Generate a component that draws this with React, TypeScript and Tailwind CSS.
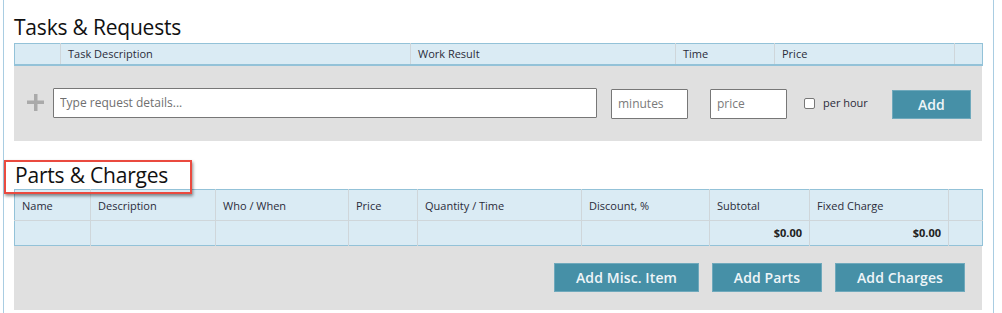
import React from 'react';

const taskCols = [
  { label: '', w: 46 },
  { label: 'Task Description', w: 350 },
  { label: 'Work Result', w: 265 },
  { label: 'Time', w: 99 },
  { label: 'Price', w: 180 },
  { label: '', w: 28 },
];

const partCols = [
  { label: 'Name', w: 76, value: '' },
  { label: 'Description', w: 125, value: '' },
  { label: 'Who / When', w: 133, value: '' },
  { label: 'Price', w: 69, value: '' },
  { label: 'Quantity / Time', w: 164, value: '' },
  { label: 'Discount, %', w: 128, value: '' },
  { label: 'Subtotal', w: 100, value: '$0.00' },
  { label: 'Fixed Charge', w: 139, value: '$0.00' },
  { label: '', w: 34, value: '' },
];

function ActionButton({ label, w }: { label: string; w: string }) {
  return (
    <button
      className={`${w} h-[29px] bg-[#4690a7] border border-[#6fa9bc] text-[#eef5f8] text-[14px] font-semibold tracking-[0.1px]`}
    >
      {label}
    </button>
  );
}

export default function App() {
  return (
    <div
      className="w-[1002px] h-[313px] bg-white overflow-hidden text-[#222]"
      style={{ fontFamily: '"Open Sans", "Noto Sans", sans-serif' }}
    >
      <div className="ml-[3px] w-[991px] h-full border-l border-r border-[#a9cde2] pl-[10px] pr-[10px]">
        {/* --- TASKS & REQUESTS --- */}
        <h2 className="pt-[13px] h-[43px] text-[21px] leading-[29px] text-[#111] tracking-[-0.2px]">
          Tasks &amp; Requests
        </h2>
        <table className="table-fixed border-collapse w-[968px]">
          <colgroup>
            {taskCols.map((c, i) => (
              <col key={i} style={{ width: c.w }} />
            ))}
          </colgroup>
          <thead>
            <tr className="h-[21px] bg-[#daebf4] border border-[#93c2d8] border-b-2">
              {taskCols.map((c, i) => (
                <th
                  key={i}
                  className="border-l border-[#cfd6da] first:border-l-0 px-[7px] text-left text-[11px] font-normal text-[#2b2b3a]"
                >
                  {c.label}
                </th>
              ))}
            </tr>
          </thead>
        </table>
        <div className="w-[968px] h-[75px] bg-[#e0e0e0] flex items-start pt-[22px]">
          <span className="w-[39px] h-[30px] flex items-center justify-center pl-[3px]">
            <svg width="17" height="17" viewBox="0 0 17 17">
              <rect x="7" y="0" width="3.5" height="17" fill="#aaaaaa" />
              <rect x="0" y="6.5" width="17" height="3.5" fill="#aaaaaa" />
            </svg>
          </span>
          <input
            className="w-[544px] h-[30px] bg-white border border-[#777] rounded-[1px] px-[6px] text-[12px] placeholder:text-[#6f6f6f] outline-none"
            placeholder="Type request details..."
          />
          <input
            className="ml-[14px] mt-[1px] w-[77px] h-[30px] bg-white border border-[#777] rounded-[1px] px-[6px] text-[12px] placeholder:text-[#7a7a7a] outline-none"
            placeholder="minutes"
          />
          <input
            className="ml-[22px] mt-[1px] w-[77px] h-[30px] bg-white border border-[#777] rounded-[1px] px-[6px] text-[12px] placeholder:text-[#7a7a7a] outline-none"
            placeholder="price"
          />
          <label className="ml-[17px] h-[31px] flex items-center text-[11px] text-[#2b2b3a]">
            <span className="w-[11px] h-[11px] bg-white border border-[#777] rounded-[2px]" />
            <span className="ml-[8px]">per hour</span>
          </label>
          <span className="ml-[24px] mt-[2px]">
            <ActionButton label="Add" w="w-[79px]" />
          </span>
        </div>

        {/* --- PARTS & CHARGES --- */}
        <div className="relative h-[48px]">
          <h2 className="pt-[22px] pl-[1px] text-[21px] leading-[24px] text-[#111] tracking-[-0.2px]">
            Parts &amp; Charges
          </h2>
          <div className="absolute left-[-10px] top-[19px] w-[188px] h-[34px] border-2 border-[#ea4a3f] shadow-[1px_2px_3px_rgba(0,0,0,0.45)] pointer-events-none" />
        </div>
        <table className="table-fixed border-collapse w-[968px]">
          <colgroup>
            {partCols.map((c, i) => (
              <col key={i} style={{ width: c.w }} />
            ))}
          </colgroup>
          <thead>
            <tr className="h-[31px] bg-[#daebf4] border border-[#93c2d8] border-b-0">
              {partCols.map((c, i) => (
                <th
                  key={i}
                  className="border-l border-b border-[#cfd6da] first:border-l-0 px-[7px] pt-[4px] text-left text-[11px] font-normal text-[#2b2b3a]"
                >
                  {c.label}
                </th>
              ))}
            </tr>
          </thead>
          <tbody>
            <tr className="h-[25px] bg-[#daebf4] border border-[#93c2d8] border-t-0">
              {partCols.map((c, i) => (
                <td
                  key={i}
                  className="border-l border-[#cfd6da] first:border-l-0 px-[7px] pt-[1px] text-right text-[11px] font-bold text-[#222]"
                >
                  {c.value}
                </td>
              ))}
            </tr>
          </tbody>
        </table>
        <div className="w-[968px] h-[64px] bg-[#e0e0e0] flex justify-end items-start pt-[17px] pr-[17px] gap-[13px]">
          <ActionButton label="Add Misc. Item" w="w-[145px]" />
          <ActionButton label="Add Parts" w="w-[110px]" />
          <ActionButton label="Add Charges" w="w-[130px]" />
        </div>
      </div>
    </div>
  );
}
